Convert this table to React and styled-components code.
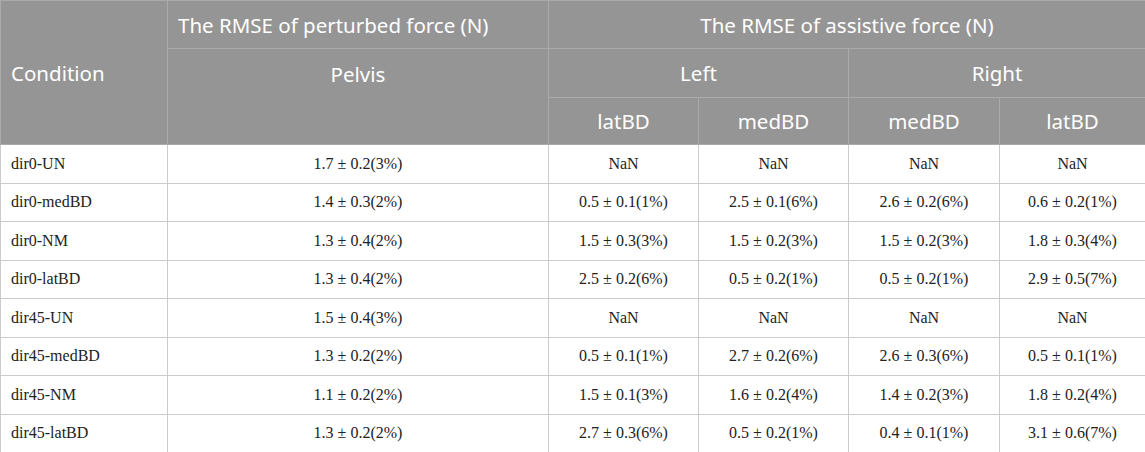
import styled, { createGlobalStyle } from 'styled-components';

const GlobalStyle = createGlobalStyle`
  body {
    margin: 0;
    background: #fff;
  }
`;

const Table = styled.table`
  width: 1145px;
  border-collapse: collapse;
  table-layout: fixed;
  border: 1px solid #c8c8c8;
`;

const HeadRow = styled.tr`
  height: ${props => props.h}px;
`;

const Th = styled.th`
  background: #959595;
  color: #fff;
  font-family: "Noto Sans", "Open Sans", sans-serif;
  font-size: 20.5px;
  font-weight: 400;
  text-align: ${props => (props.left ? 'left' : 'center')};
  padding: ${props => (props.top ? '11px 10px 0' : '0 10px')};
  border: 1px solid #aaaaaa;
  vertical-align: ${props => (props.top ? 'top' : 'middle')};
  white-space: nowrap;
`;

const Row = styled.tr`
  height: 38.5px;
`;

const Td = styled.td`
  font-family: "Liberation Serif", "Times New Roman", serif;
  font-size: 16px;
  color: #222;
  text-align: ${props => (props.left ? 'left' : 'center')};
  padding: 0 10px;
  border: 1px solid #cccccc;
  white-space: nowrap;
`;

const rows = [
  ['dir0-UN', '1.7 ± 0.2(3%)', 'NaN', 'NaN', 'NaN', 'NaN'],
  ['dir0-medBD', '1.4 ± 0.3(2%)', '0.5 ± 0.1(1%)', '2.5 ± 0.1(6%)', '2.6 ± 0.2(6%)', '0.6 ± 0.2(1%)'],
  ['dir0-NM', '1.3 ± 0.4(2%)', '1.5 ± 0.3(3%)', '1.5 ± 0.2(3%)', '1.5 ± 0.2(3%)', '1.8 ± 0.3(4%)'],
  ['dir0-latBD', '1.3 ± 0.4(2%)', '2.5 ± 0.2(6%)', '0.5 ± 0.2(1%)', '0.5 ± 0.2(1%)', '2.9 ± 0.5(7%)'],
  ['dir45-UN', '1.5 ± 0.4(3%)', 'NaN', 'NaN', 'NaN', 'NaN'],
  ['dir45-medBD', '1.3 ± 0.2(2%)', '0.5 ± 0.1(1%)', '2.7 ± 0.2(6%)', '2.6 ± 0.3(6%)', '0.5 ± 0.1(1%)'],
  ['dir45-NM', '1.1 ± 0.2(2%)', '1.5 ± 0.1(3%)', '1.6 ± 0.2(4%)', '1.4 ± 0.2(3%)', '1.8 ± 0.2(4%)'],
  ['dir45-latBD', '1.3 ± 0.2(2%)', '2.7 ± 0.3(6%)', '0.5 ± 0.2(1%)', '0.4 ± 0.1(1%)', '3.1 ± 0.6(7%)'],
];

export default function App() {
  return (
    <>
      <GlobalStyle />
      <Table>
        <colgroup>
          <col style={{ width: 167 }} />
          <col style={{ width: 381 }} />
          <col style={{ width: 150 }} />
          <col style={{ width: 150 }} />
          <col style={{ width: 151 }} />
          <col style={{ width: 146 }} />
        </colgroup>
        <thead>
          <HeadRow h={48}>
            <Th left rowSpan={3}>Condition</Th>
            <Th left>The RMSE of perturbed force (N)</Th>
            <Th colSpan={4}>The RMSE of assistive force (N)</Th>
          </HeadRow>
          <HeadRow h={49}>
            <Th top rowSpan={2}>Pelvis</Th>
            <Th colSpan={2}>Left</Th>
            <Th colSpan={2}>Right</Th>
          </HeadRow>
          <HeadRow h={47}>
            <Th>latBD</Th>
            <Th>medBD</Th>
            <Th>medBD</Th>
            <Th>latBD</Th>
          </HeadRow>
        </thead>
        <tbody>
          {rows.map(r => (
            <Row key={r[0]}>
              {r.map((c, i) => (
                <Td key={i} left={i === 0}>{c}</Td>
              ))}
            </Row>
          ))}
        </tbody>
      </Table>
    </>
  );
}
